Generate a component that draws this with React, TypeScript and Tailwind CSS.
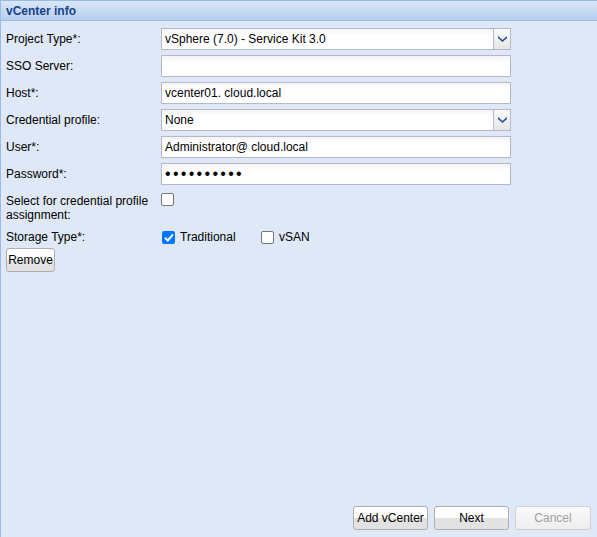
import { useState } from "react";

const font = { fontFamily: "'Liberation Sans', Arial, sans-serif" };

function Field({ label, children }: { label: string; children: React.ReactNode }) {
  return (
    <div className="flex h-[22px] items-center">
      <div className="w-[155px] shrink-0 text-[12px] text-black">{label}</div>
      <div className="w-[350px]">{children}</div>
    </div>
  );
}

function TextBox({ value, password }: { value?: string; password?: boolean }) {
  return (
    <div className="flex h-[22px] items-center border border-[#b5b8c8] bg-gradient-to-b from-[#f3f3f3] to-white to-30% px-[3px] text-[12px] text-black">
      {password ? <span className="text-[16px] tracking-[2.3px] leading-none">{value}</span> : value}
    </div>
  );
}

function Combo({ value }: { value: string }) {
  return (
    <div className="flex h-[22px] border border-[#b5b8c8] bg-gradient-to-b from-[#f3f3f3] to-white to-30% text-[12px] text-black">
      <div className="flex flex-1 items-center px-[3px]">{value}</div>
      <div className="flex w-[17px] items-center justify-center border-l border-[#b5b8c8] bg-gradient-to-b from-[#fafafa] to-[#e6e6e6]">
        <svg width="9" height="6" viewBox="0 0 9 6">
          <path d="M0 0 L4.5 4 L9 0 L9 2 L4.5 6 L0 2 Z" fill="#1f4e8f" />
        </svg>
      </div>
    </div>
  );
}

function Check({ checked }: { checked?: boolean }) {
  return checked ? (
    <div className="flex h-[13px] w-[13px] items-center justify-center rounded-[2px] bg-[#0075ff]">
      <svg width="10" height="9" viewBox="0 0 10 9">
        <path d="M1 4.8 L3.8 7.5 L9 1.3" stroke="white" strokeWidth="2" fill="none" />
      </svg>
    </div>
  ) : (
    <div className="h-[13px] w-[13px] rounded-[2px] border border-[#767676] bg-white" />
  );
}

function Btn({ children, disabled, w }: { children: React.ReactNode; disabled?: boolean; w: string }) {
  return (
    <div
      className={`flex h-[24px] ${w} items-center justify-center whitespace-nowrap rounded-[3px] border text-[12px] ${
        disabled
          ? "border-[#d0d0d0] bg-gradient-to-b from-[#fafafa] to-[#eeeeee] text-[#a0a0a0]"
          : "border-[#aeaeae] bg-gradient-to-b from-white from-50% to-[#e2e2e2] to-50% text-black"
      }`}
    >
      {children}
    </div>
  );
}

export default function App() {
  const [storage] = useState("traditional");
  return (
    <div style={font} className="flex h-[537px] w-[597px] flex-col border-l border-t border-[#99bbe8] bg-[#dfe8f6]">
      <div className="flex h-[20px] items-center border-b border-[#99bbe8] bg-gradient-to-b from-[#dae7f6] to-[#b8cfee] px-[5px] text-[12px] font-bold text-[#15428b]">
        vCenter info
      </div>
      <div className="flex flex-1 flex-col px-[5px] pt-[7px]">
        <div className="flex flex-col gap-[5px]">
          <Field label="Project Type*:">
            <Combo value="vSphere (7.0) - Service Kit 3.0" />
          </Field>
          <Field label="SSO Server:">
            <TextBox />
          </Field>
          <Field label="Host*:">
            <TextBox value="vcenter01. cloud.local" />
          </Field>
          <Field label="Credential profile:">
            <Combo value="None" />
          </Field>
          <Field label="User*:">
            <TextBox value="Administrator@  cloud.local" />
          </Field>
          <Field label="Password*:">
            <TextBox value="••••••••••" password />
          </Field>
        </div>
        <div className="mt-[7px] flex">
          <div className="w-[155px] pt-[2px] text-[12px] leading-[14px] text-black">
            Select for credential profile assignment:
          </div>
          <div className="pt-[1px]">
            <Check />
          </div>
        </div>
        <div className="mt-[6px] flex items-center">
          <div className="w-[156px] text-[12px] text-black">Storage Type*:</div>
          <Check checked={storage === "traditional"} />
          <span className="ml-[5px] w-[81px] text-[12px] text-black">Traditional</span>
          <Check checked={false} />
          <span className="ml-[5px] text-[12px] text-black">vSAN</span>
        </div>
        <div className="mt-[2px] flex">
          <Btn w="w-[49px]">Remove</Btn>
        </div>
        <div className="mt-auto mb-[7px] flex justify-end gap-[6px] pr-[1px]">
          <Btn w="w-[75px]">Add vCenter</Btn>
          <Btn w="w-[75px]">Next</Btn>
          <Btn w="w-[76px]" disabled>
            Cancel
          </Btn>
        </div>
      </div>
    </div>
  );
}
